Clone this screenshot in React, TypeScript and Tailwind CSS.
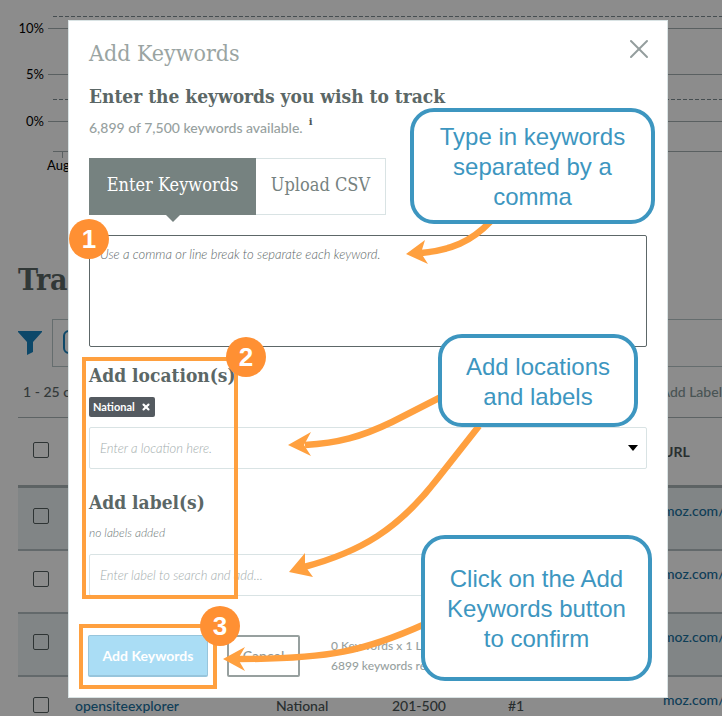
import { useState, type ReactNode } from 'react';
import clsx from 'clsx';
import { X } from 'lucide-react';

const SLAB = "font-['Roboto_Slab','DejaVu_Serif_Condensed','DejaVu_Serif',serif]";

const GRID = [
  { y: 28, label: '10%' },
  { y: 74, label: '5%' },
  { y: 121, label: '0%' },
];

const ROWS = [
  { keyword: 'moz pro', location: 'National', volume: '201-500', rank: '#1', url: 'moz.com/' },
  { keyword: 'keyword explorer', location: 'National', volume: '201-500', rank: '#1', url: 'moz.com/' },
  { keyword: 'link explorer', location: 'National', volume: '201-500', rank: '#1', url: 'moz.com/' },
  { keyword: 'opensiteexplorer', location: 'National', volume: '201-500', rank: '#1', url: 'moz.com/' },
];

const CALLOUTS = [
  { text: 'Type in keywords separated by a comma', box: 'left-[341px] top-[87px] w-[245px] h-[116px] px-4' },
  { text: 'Add locations and labels', box: 'left-[369px] top-[313px] w-[200px] h-[93px] px-5' },
  { text: 'Click on the Add Keywords button to confirm', box: 'left-[352px] top-[514px] w-[231px] h-[146px] px-5' },
];

const STEPS = [
  { n: 1, pos: 'left-0 top-[198px]' },
  { n: 2, pos: 'left-[157px] top-[316px]' },
  { n: 3, pos: 'left-[131px] top-[585px]' },
];

// line = shaft, head = arrow head outline
const ARROWS = [
  { line: 'M491 221 C471 242 451 250 421 253', head: '406,254 425,240 421,253 428,264' },
  { line: 'M441 397 L392 422 C361 437 338 443 305 445', head: '288,445 311,432 304,445 311,456' },
  { line: 'M479 426 L438 478 C398 530 360 552 304 567', head: '289,572 305,553 305,566 313,577' },
  { line: 'M425 624 C365 651 330 659 238 659', head: '223,659 245,647 238,659 245,671' },
];

function Chart() {
  return (
    <svg className="block w-full h-[240px] font-['Lato',sans-serif] text-[13px]" aria-hidden="true">
      <g stroke="#a4afb1" strokeWidth="1" shapeRendering="crispEdges">
        <line x1="53" x2="100%" y1="16.5" y2="16.5" stroke="#7f8d93" strokeDasharray="4 2" />
        <line x1="53" x2="100%" y1="99.5" y2="99.5" stroke="#7f8d93" strokeDasharray="4 2" />
        {GRID.map(g => (
          <line key={g.label} x1="48" x2="100%" y1={g.y + 0.5} y2={g.y + 0.5} />
        ))}
        <line x1="53" x2="100%" y1="151.5" y2="151.5" />
        <line x1="62.5" x2="62.5" y1="151" y2="158" />
      </g>
      {GRID.map(g => (
        <text key={g.label} x="44" y={g.y + 5} textAnchor="end">{g.label}</text>
      ))}
      <text x="47" y="170">Aug</text>
    </svg>
  );
}

function RowCheckbox({ label }: { label: string }) {
  return (
    <input
      type="checkbox"
      aria-label={label}
      className="block appearance-none w-4 h-4 ml-[15px] border border-[#555f60] rounded-xs"
    />
  );
}

function Rankings() {
  return (
    <main className="text-sm text-[#4b5657]">
      <Chart />
      <div className="pl-[18px]">
        <h1 className={clsx(SLAB, 'pt-[22px] text-[30px] leading-9 font-bold text-[#5a6665]')}>Tracked Keywords</h1>
        <div className="flex items-center gap-[10px] mt-[21px]">
          <svg viewBox="0 0 24 24" className="w-6 h-6 shrink-0 fill-[#1884c0]" aria-hidden="true">
            <path d="M0 0h24v1L15 11v10l-6 3V11L0 1z" />
          </svg>
          <div className="flex-1 h-12 border border-r-0 border-[#b9c6c8] pl-[10px] pt-[10px]">
            <div className="w-40 h-6 border-2 border-[#1884c0] rounded-md" />
          </div>
        </div>
        <div className="flex justify-between h-[50px] items-center pl-[5px] font-medium text-[#5d6869]">
          <span>1 - 25 of 6,899</span>
          <button type="button" className="text-[#85999a]">Add Label</button>
        </div>
        <table className="w-full table-fixed text-left border-t border-[#a9b4b7]">
          <colgroup>
            <col className="w-[57px]" />
            <col className="w-[201px]" />
            <col className="w-[116px]" />
            <col className="w-[116px]" />
            <col className="w-[155px]" />
            <col />
          </colgroup>
          <thead>
            <tr className="h-[69px] border-b-3 border-[#a9b4b7]">
              <th className="pb-1"><RowCheckbox label="Select all" /></th>
              <th>Keyword</th>
              <th>Location</th>
              <th>Volume</th>
              <th>Rank</th>
              <th>URL</th>
            </tr>
          </thead>
          <tbody>
            {ROWS.map((r, i) => (
              <tr
                key={r.keyword}
                className={clsx('h-[63px] border-b-2 border-[#b5c0c3] font-medium', i % 2 === 0 && 'bg-[#ebf3f4]')}
              >
                <td className="pb-1"><RowCheckbox label={r.keyword} /></td>
                <td className="pb-0.5"><a href="#keyword" className="text-[#1a719f]">{r.keyword}</a></td>
                <td className="pb-0.5">{r.location}</td>
                <td className="pb-0.5">{r.volume}</td>
                <td className="pb-0.5">{r.rank}</td>
                <td className="pb-3.5"><a href="#url" className="text-[#1a719f]">{r.url}</a></td>
              </tr>
            ))}
          </tbody>
        </table>
      </div>
    </main>
  );
}

function SectionTitle({ children }: { children: ReactNode }) {
  return <h3 className={clsx(SLAB, 'text-[19px] leading-7 font-bold text-[#5b6766]')}>{children}</h3>;
}

function Annotations() {
  return (
    <>
      <div className="absolute left-[13px] top-[336px] w-[156px] h-[242px] border-4 border-[#ffa03f] pointer-events-none" />
      <div className="absolute left-[10px] top-[603px] w-[138px] h-[65px] border-4 border-[#ffa03f] pointer-events-none" />
      <svg className="absolute inset-0 w-full h-full pointer-events-none" aria-hidden="true">
        <g transform="translate(-69 -21)">
          {ARROWS.map(a => (
            <g key={a.line}>
              <path d={a.line} fill="none" stroke="#ffa03f" strokeWidth="6.5" />
              <polygon points={a.head} fill="#ffa03f" />
            </g>
          ))}
        </g>
      </svg>
      {CALLOUTS.map(c => (
        <div
          key={c.text}
          className={clsx(
            "absolute flex items-center justify-center pt-0.5 text-center rounded-3xl border-4 border-[#3d96c0] bg-white font-['Liberation_Sans',sans-serif] text-2xl leading-[30px] text-[#3d96c0]",
            c.box
          )}
        >
          {c.text}
        </div>
      ))}
      {STEPS.map(s => (
        <div
          key={s.n}
          className={clsx(
            "absolute flex items-center justify-center pt-0.5 w-10 h-10 rounded-full bg-[#ff9033] font-['Liberation_Sans',sans-serif] text-[26px] font-bold text-white",
            s.pos
          )}
        >
          {s.n}
        </div>
      ))}
    </>
  );
}

function AddKeywordsDialog() {
  const [tab, setTab] = useState('enter');

  return (
    <div role="dialog" aria-labelledby="dialog-title" className="relative bg-white border border-[#d9e3e4] px-5 pt-4 pb-5 text-sm">
      <div className="flex justify-between items-start h-8">
        <h2 id="dialog-title" className={clsx(SLAB, 'text-[23px] leading-8 font-light text-[#9aa4a2]')}>Add Keywords</h2>
        <button type="button" aria-label="Close" className="-mt-1 -mr-2 text-[#939d9d]">
          <X className="w-8 h-8" strokeWidth={1.5} />
        </button>
      </div>
      <div className="mt-[13px]"><SectionTitle>Enter the keywords you wish to track</SectionTitle></div>
      <p className="flex gap-1.5 mt-2 leading-5 font-medium text-[#97a1a0]">
        6,899 of 7,500 keywords available.
        <span className="-mt-1.5 font-['DejaVu_Serif',serif] text-[10px] font-bold text-[#4b5657]">i</span>
      </p>

      <div className={clsx(SLAB, 'flex mt-5 h-[57px] text-lg')}>
        <button
          type="button"
          onClick={() => setTab('enter')}
          className={clsx(
            'relative min-w-[167px] px-4 pb-1',
            tab === 'enter'
              ? "bg-[#768280] text-white after:absolute after:top-full after:left-1/2 after:-translate-x-1/2 after:border-x-[7px] after:border-t-[7px] after:border-x-transparent after:border-t-[#768280] after:content-['']"
              : 'border border-[#d9e3e4] text-[#768280]'
          )}
        >
          Enter Keywords
        </button>
        <button
          type="button"
          onClick={() => setTab('upload')}
          className={clsx(
            'min-w-[130px] px-[14px] pb-1',
            tab === 'upload' ? 'bg-[#768280] text-white' : 'border border-l-0 border-[#d9e3e4] text-[#768280]'
          )}
        >
          Upload CSV
        </button>
      </div>

      <textarea
        aria-label="Keywords"
        placeholder="Use a comma or line break to separate each keyword."
        className="block w-full h-28 mt-5 px-[10px] py-2 border border-[#5d6768] rounded-xs resize-none text-[13px] leading-5 placeholder:italic placeholder:font-light placeholder:text-[#5d6768]"
      />

      <div className="mt-[14px]"><SectionTitle>Add location(s)</SectionTitle></div>
      <span className="flex w-fit items-center gap-1.5 h-5 mt-2 px-1 rounded-xs bg-[#545a60] text-[11px] font-bold text-white">
        National
        <button type="button" aria-label="Remove National"><X className="w-[10px] h-[10px]" strokeWidth={5} /></button>
      </span>
      <div className="relative mt-[10px]">
        <input
          type="text"
          aria-label="Location"
          placeholder="Enter a location here."
          className="block w-full h-[42px] px-[10px] border border-[#d9e3e4] rounded-xs text-[13px] placeholder:italic placeholder:font-light placeholder:text-[#a3adad]"
        />
        <svg viewBox="0 0 10 6" className="absolute right-[9px] top-[18px] w-[10px] h-[6px]" aria-hidden="true">
          <path d="M0 0h10L5 6z" />
        </svg>
      </div>

      <div className="mt-[19px]"><SectionTitle>Add label(s)</SectionTitle></div>
      <p className="mt-[7px] text-xs leading-5 italic font-light text-[#6d7878]">no labels added</p>
      <input
        type="text"
        aria-label="Label"
        placeholder="Enter label to search and add..."
        className="block w-full h-[42px] mt-[11px] px-[10px] border border-[#d9e3e4] rounded-xs text-[13px] placeholder:italic placeholder:font-light placeholder:text-[#a3adad]"
      />

      <div className="flex items-center mt-[39px]">
        <button type="button" className="-ml-px w-[120px] h-[42px] rounded-xs border border-b-2 border-[#97c5dc] bg-[#aaddf5] font-bold text-white">
          Add Keywords
        </button>
        <button type="button" className="ml-[19px] w-[73px] h-[42px] rounded-xs border-2 border-[#97a09f] font-medium text-[#8f9a99]">
          Cancel
        </button>
        <p className="ml-[31px] text-xs leading-5 font-medium text-[#97a1a0]">
          0 Keywords x 1 Location
          <br />
          6899 keywords remaining
        </p>
      </div>

      <Annotations />
    </div>
  );
}

export default function App() {
  return (
    <div className="relative h-screen overflow-hidden bg-white font-['Lato',sans-serif]">
      <Rankings />
      <div className="absolute inset-0 bg-black/45 pt-5 pl-[68px] pr-[54px]">
        <AddKeywordsDialog />
      </div>
    </div>
  );
}
